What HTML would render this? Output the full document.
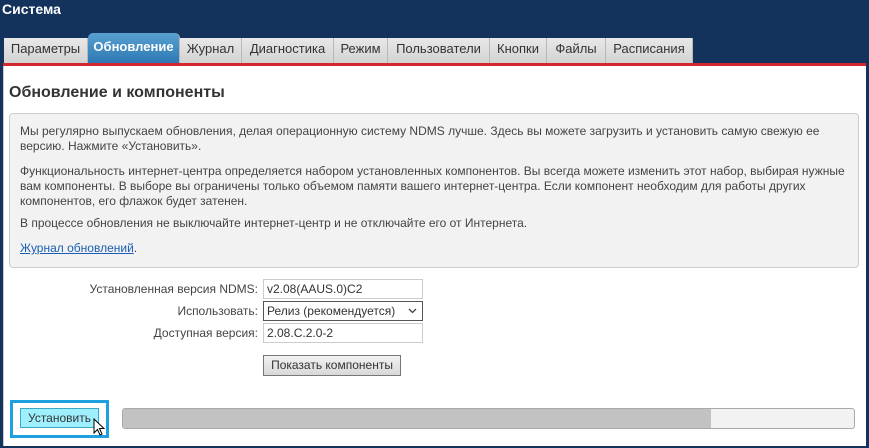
<!DOCTYPE html>
<html><head><meta charset="utf-8"><style>
*{box-sizing:border-box;margin:0;padding:0}
body{width:869px;height:448px;background:#13335c;font-family:"Liberation Sans",Arial,sans-serif;position:relative;overflow:hidden;color:#333}
.t{position:absolute;color:#fff;font-weight:bold;font-size:14px;left:2px;top:1px}
.tab{position:absolute;top:38px;height:26px;background:linear-gradient(#e8e8e8,#d2d2d2);border-right:1px solid #b8b8b8;font-size:13px;color:#333;text-align:center;line-height:22px}
.act{top:33px;height:31px;background:linear-gradient(#58a0d0,#2c78b4);color:#fff;font-weight:bold;border-radius:5px 5px 0 0;line-height:28px}
.red{position:absolute;left:3px;top:63px;width:863px;height:3px;background:#d0282e}
.panel{position:absolute;left:3px;top:66px;width:863px;height:380px;background:#fff;border-left:1px solid #ccc}
h1{position:absolute;left:9px;top:84px;font-size:16px;font-weight:bold;color:#333}
.info{position:absolute;left:9px;top:113px;width:850px;height:155px;background:#f2f2f2;border:1px solid #ccc;border-radius:4px;font-size:12px;color:#444;padding:10px 10px;line-height:15px}
.info p{margin-bottom:10px}
.info a{color:#1a5fb4}
.lbl{position:absolute;right:611px;font-size:12px;color:#444}
.inp{position:absolute;left:263px;width:160px;height:20px;border:1px solid #ccc;font-size:12px;padding:2px 3px;color:#333;background:#fff}
.btn{position:absolute;font-size:12px;color:#333;border:1px solid #777;background:linear-gradient(#f2f2f2,#d8d8d8);text-align:center}
</style></head><body>
<div class="t">Система</div>
<div class="tab" style="left:4px;width:84px">Параметры</div>
<div class="tab act" style="left:88px;width:92px">Обновление</div>
<div class="tab" style="left:180px;width:62px">Журнал</div>
<div class="tab" style="left:242px;width:92px">Диагностика</div>
<div class="tab" style="left:334px;width:54px">Режим</div>
<div class="tab" style="left:388px;width:102px">Пользователи</div>
<div class="tab" style="left:490px;width:57px">Кнопки</div>
<div class="tab" style="left:547px;width:59px">Файлы</div>
<div class="tab" style="left:606px;width:87px">Расписания</div>
<div class="red"></div>
<div class="panel"></div>
<h1>Обновление и компоненты</h1>
<div class="info">
<p>Мы регулярно выпускаем обновления, делая операционную систему NDMS лучше. Здесь вы можете загрузить и установить самую свежую ее версию. Нажмите «Установить».</p>
<p style="margin-bottom:7px">Функциональность интернет-центра определяется набором установленных компонентов. Вы всегда можете изменить этот набор, выбирая нужные вам компоненты. В выборе вы ограничены только объемом памяти вашего интернет-центра. Если компонент необходим для работы других компонентов, его флажок будет затенен.</p>
<p>В процессе обновления не выключайте интернет-центр и не отключайте его от Интернета.</p>
<p><a href="#" style="text-decoration:underline">Журнал обновлений</a>.</p>
</div>
<div class="lbl" style="top:282px">Установленная версия NDMS:</div>
<div class="inp" style="top:279px">v2.08(AAUS.0)C2</div>
<div class="lbl" style="top:304px">Использовать:</div>
<div class="inp" style="top:301px;border-color:#555">Релиз (рекомендуется)<svg style="position:absolute;right:5px;top:6px" width="9" height="6" viewBox="0 0 9 6"><path d="M1 1 L4.5 4.5 L8 1" fill="none" stroke="#444" stroke-width="1.3"/></svg></div>
<div class="lbl" style="top:326px">Доступная версия:</div>
<div class="inp" style="top:323px">2.08.C.2.0-2</div>
<div class="btn" style="left:263px;top:355px;width:138px;height:21px;line-height:19px">Показать компоненты</div>
<div style="position:absolute;left:10px;top:400px;width:99px;height:38px;border:3px solid #1ea0e0"></div>
<div class="btn" style="left:20px;top:408px;width:79px;height:20px;line-height:18px;background:#9ff0ff;border-color:#3aa8c8">Установить</div>
<svg style="position:absolute;left:93px;top:418px" width="16" height="20" viewBox="0 0 16 20"><path d="M1 1 L1 15 L4.5 11.5 L7 17 L9 16 L6.5 10.5 L11 10.5 Z" fill="#fff" stroke="#000" stroke-width="1"/></svg>
<div style="position:absolute;left:122px;top:408px;width:733px;height:21px;border:1px solid #aaa;border-radius:3px;background:#f2f2f2;overflow:hidden"><div style="width:588px;height:100%;background:#c2c2c2"></div></div>
</body></html>
